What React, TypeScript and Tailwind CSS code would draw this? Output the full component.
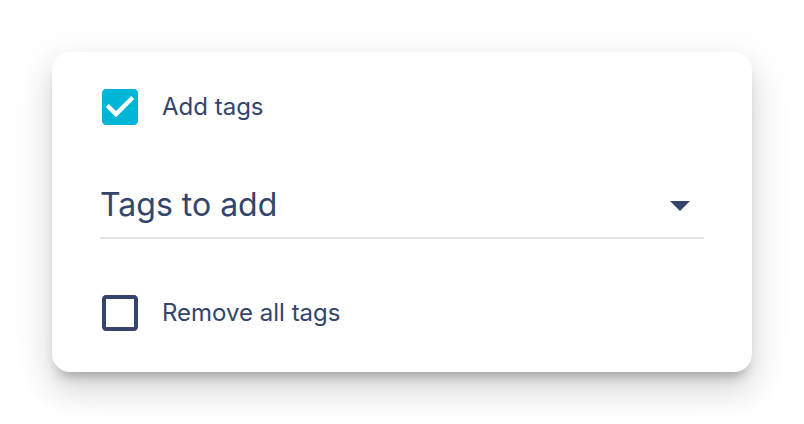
export default function App() {
  return (
    <div className="min-h-screen w-full bg-white pt-[52px] pl-[52px]" style={{ fontFamily: "Inter, 'Noto Sans', sans-serif" }}>
      <div className="w-[700px] rounded-[18px] bg-white px-[48px] pt-[31px] pb-[35px] shadow-[0_10px_12px_-6px_rgba(0,0,0,0.28),0_20px_32px_2px_rgba(0,0,0,0.1),0_8px_40px_6px_rgba(0,0,0,0.06)]">
        {/* Add tags */}
        <div className="flex h-[48px] items-center">
          <svg viewBox="0 0 24 24" className="ml-[-4px] h-[48px] w-[48px] shrink-0">
            <path
              fill="#00b6d6"
              d="M19 3H5c-1.11 0-2 .9-2 2v14c0 1.1.89 2 2 2h14c1.11 0 2-.9 2-2V5c0-1.1-.89-2-2-2zm-9 14l-5-5 1.41-1.41L10 14.17l7.59-7.59L19 8l-9 9z"
            />
            <path fill="#fff" d="M10 17l-5-5 1.41-1.41L10 14.17l7.59-7.59L19 8l-9 9z" />
          </svg>
          <span className="ml-[18px] text-[24px] leading-[32px] text-[#34456b]">Add tags</span>
        </div>

        {/* Tags select */}
        <div className="mt-[54px] flex items-center justify-between border-b-2 border-[#e2e2e2] pb-[12px]">
          <span className="text-[32px] leading-[40px] text-[#34456b]">Tags to add</span>
          <svg viewBox="0 0 24 24" className="h-[48px] w-[48px] shrink-0 -my-[4px]">
            <path fill="#34456b" d="M7 10l5 5 5-5z" />
          </svg>
        </div>

        {/* Remove all tags */}
        <div className="mt-[50px] flex h-[48px] items-center">
          <svg viewBox="0 0 24 24" className="ml-[-4px] h-[48px] w-[48px] shrink-0">
            <path
              fill="#34456b"
              d="M19 5v14H5V5h14m0-2H5c-1.1 0-2 .9-2 2v14c0 1.1.9 2 2 2h14c1.1 0 2-.9 2-2V5c0-1.1-.9-2-2-2z"
            />
          </svg>
          <span className="ml-[18px] text-[24px] leading-[32px] text-[#34456b]">Remove all tags</span>
        </div>
      </div>
    </div>
  );
}
